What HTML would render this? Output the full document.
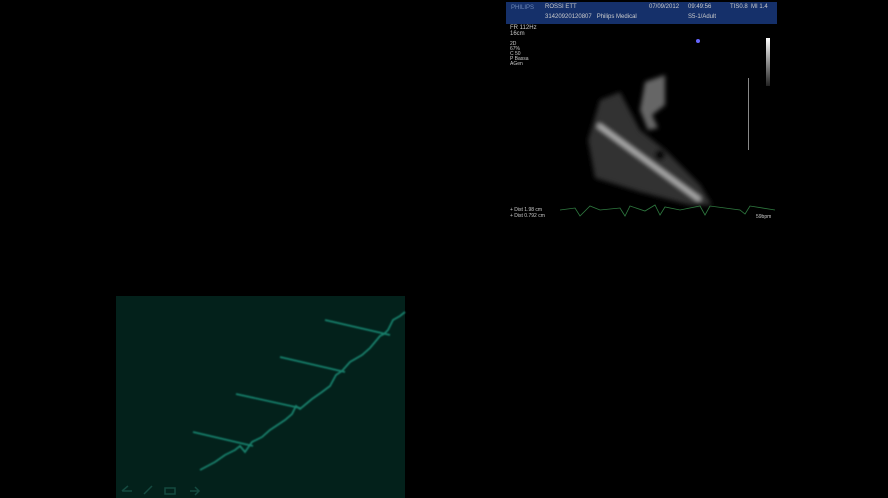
<!DOCTYPE html>
<html><head><style>
body{margin:0;background:#000;width:888px;height:498px;overflow:hidden;position:relative;font-family:"Liberation Sans",sans-serif}
.t{position:absolute;color:#ccc;font-size:5px;white-space:nowrap}
</style></head><body>
<div style="position:absolute;left:506px;top:2px;width:271px;height:22px;background:#15306a"></div>
<div class="t" style="left:511px;top:5px;color:#6f88b5;font-size:6px">PHILIPS</div>
<div class="t" style="left:545px;top:4px;font-size:6px">ROSSI ETT</div>
<div class="t" style="left:649px;top:4px;font-size:6px">07/09/2012</div>
<div class="t" style="left:688px;top:4px;font-size:6px">09:49:56</div>
<div class="t" style="left:730px;top:4px;font-size:6px">TIS0.8 &nbsp;MI 1.4</div>
<div class="t" style="left:545px;top:14px;font-size:6px">31420920120807 &nbsp;&nbsp;Philips Medical</div>
<div class="t" style="left:688px;top:14px;font-size:6px">S5-1/Adult</div>
<div class="t" style="left:510px;top:25px;font-size:6px">FR 112Hz<br>16cm</div>
<div class="t" style="left:510px;top:42px;line-height:5px">2D<br>67%<br>C 50<br>P Bassa<br>AGen</div>
<div class="t" style="left:510px;top:207px">+ Dist 1.98 cm<br>+ Dist 0.792 cm</div>
<div class="t" style="left:756px;top:214px">59bpm</div>
<div style="position:absolute;left:766px;top:38px;width:4px;height:48px;background:linear-gradient(#fff,#222)"></div>
<div style="position:absolute;left:748px;top:78px;width:1px;height:72px;background:#888"></div>
<div style="position:absolute;left:696px;top:39px;width:4px;height:4px;border-radius:50%;background:#66f"></div>
<svg style="position:absolute;left:0;top:0" width="888" height="498">
<defs><filter id="b"><feGaussianBlur stdDeviation="2.5"/></filter><filter id="s"><feGaussianBlur stdDeviation="0.8"/></filter></defs>
<g filter="url(#b)">
<path d="M600 100 L620 92 L640 130 L665 150 L700 185 L712 205 L690 205 L640 192 L595 178 L588 140 Z" fill="#333"/>
<path d="M645 82 L665 75 L665 105 L652 115 L658 128 L648 130 L640 110 Z" fill="#666"/>
<path d="M598 125 L700 200" stroke="#bbb" stroke-width="4"/>
<circle cx="660" cy="155" r="5" fill="#000"/>
</g>
<path d="M560 210 L575 208 L580 216 L590 206 L600 210 L620 208 L625 216 L630 206 L645 211 L655 205 L660 215 L665 207 L680 210 L700 206 L705 215 L710 206 L740 210 L745 214 L750 206 L775 210" stroke="#2f7a40" stroke-width="0.8" fill="none"/>
<rect x="116" y="296" width="289" height="202" fill="#03211b"/>
<g stroke="#17806c" stroke-width="1.8" fill="none" filter="url(#s)">
<path d="M193 432 L253 446 M236 394 L300 408 M280 357 L345 372 M325 320 L390 335"/>
<path d="M200 470 L215 462 L225 455 L235 450 L240 446 L245 452 L252 442 L262 437 L270 430 L285 420 L292 414 L296 406 L300 409 L312 399 L322 392 L330 386 L336 375 L342 371 L350 362 L362 355 L370 348 L375 342 L380 336 L384 334 L388 330 L393 320 L400 316 L405 312"/>
</g>
<g stroke="#154a40" stroke-width="1.5" fill="none"><path d="M122 491 L128 486 M122 491 L132 491 M144 494 L152 486 M165 488 L175 488 L175 494 L165 494 Z M190 491 L198 491 M195 487 L199 491 L195 495"/></g>
</svg>
</body></html>
